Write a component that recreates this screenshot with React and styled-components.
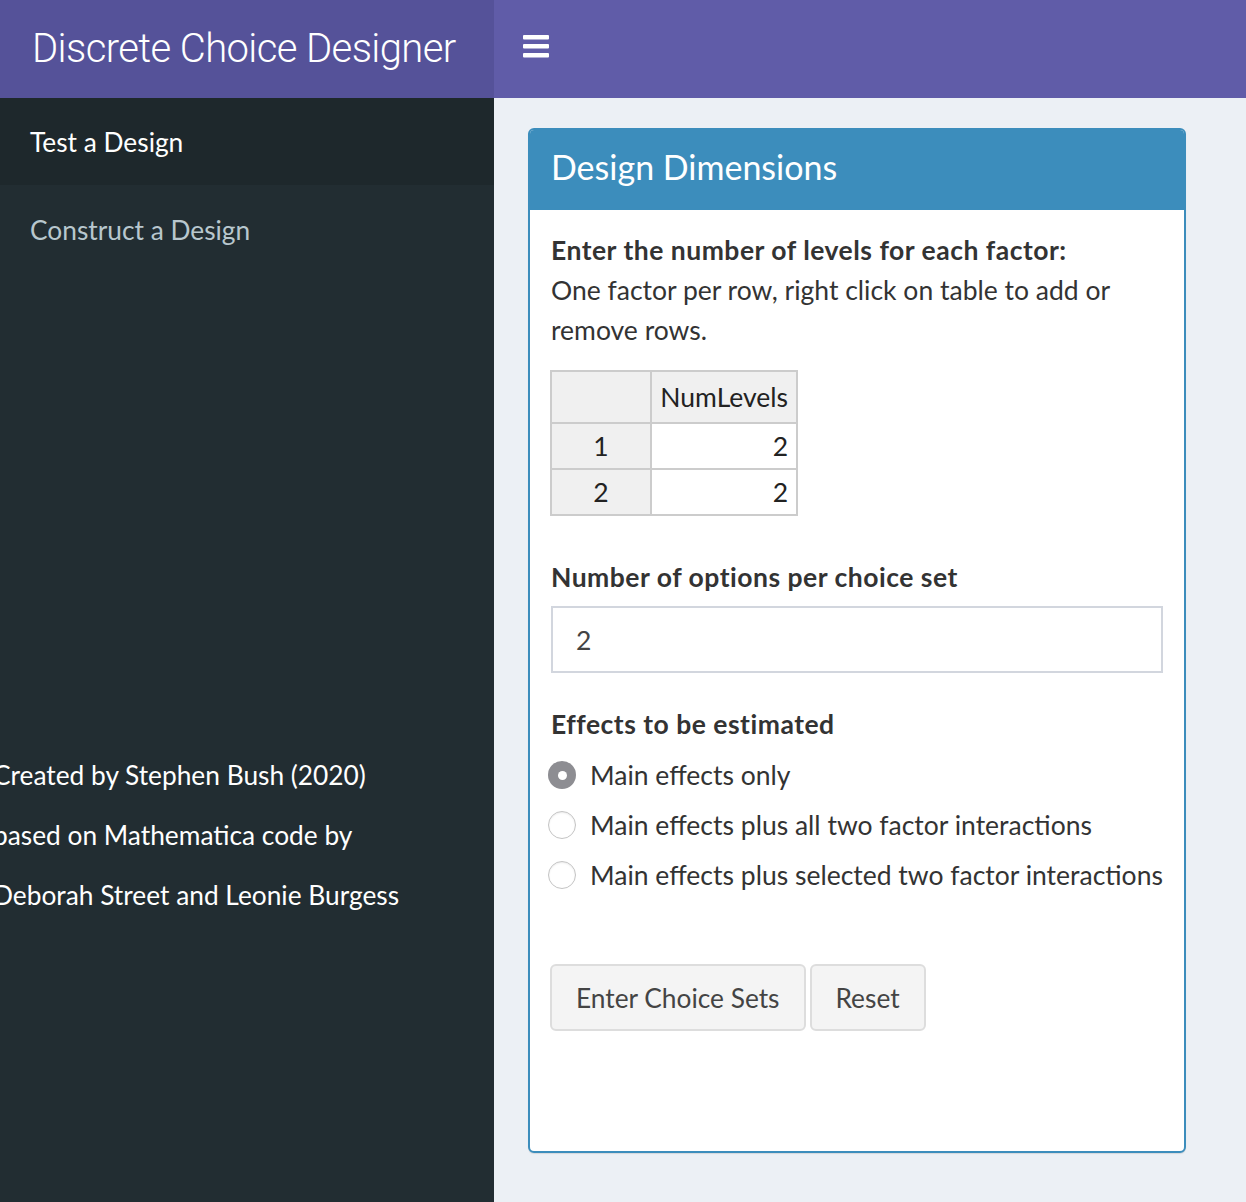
import React from "react";
import styled, { createGlobalStyle } from "styled-components";

const Global = createGlobalStyle`
  html, body { margin: 0; padding: 0; }
  body {
    background: #ecf0f5;
    font-family: Lato, "Open Sans", sans-serif;
    color: #333;
  }
  * { box-sizing: border-box; }
`;

const Page = styled.div`
  width: 1246px;
  min-height: 1202px;
  display: flex;
  flex-direction: column;
  overflow: hidden;
`;

const Header = styled.header`
  display: flex;
  height: 98px;
`;

const Logo = styled.div`
  width: 494px;
  background: #555299;
  color: #fff;
  font-family: Roboto, "Liberation Sans", sans-serif;
  font-weight: 300;
  font-size: 40px;
  letter-spacing: -0.6px;
  display: flex;
  align-items: center;
  padding-left: 32px;
  padding-bottom: 2px;
`;

const Navbar = styled.nav`
  flex: 1;
  background: #605ca8;
  display: flex;
  align-items: center;
  padding-left: 29px;
`;

const Toggle = styled.button`
  background: none;
  border: 0;
  padding: 0;
  display: flex;
  margin-top: -4px;
`;

const Body = styled.div`
  display: flex;
  flex: 1;
`;

const Sidebar = styled.aside`
  width: 494px;
  background: #222d32;
  min-height: 1104px;
  display: flex;
  flex-direction: column;
`;

const MenuItem = styled.a`
  height: 87px;
  display: flex;
  align-items: center;
  padding-left: 30px;
  padding-top: ${(p) => (p.$active ? "0" : "3px")};
  font-size: 26.3px;
  color: ${(p) => (p.$active ? "#fff" : "#b8c7ce")};
  background: ${(p) => (p.$active ? "#1e282c" : "transparent")};
  text-decoration: none;
`;

const Credits = styled.div`
  margin-top: 473px;
  margin-left: -7px;
  color: #fff;
  font-size: 26.3px;
  line-height: 60px;
  white-space: nowrap;
`;

const Content = styled.main`
  flex: 1;
  padding: 30px 60px 0 34px;
`;

const Box = styled.section`
  border: 2px solid #3c8dbc;
  border-radius: 6px;
  background: #fff;
  height: 1025px;
  overflow: hidden;
  box-shadow: 0 1px 1px rgba(0, 0, 0, 0.1);
`;

const BoxHeader = styled.div`
  background: #3c8dbc;
  color: #fff;
  height: 80px;
  display: flex;
  align-items: center;
  padding-left: 21px;
  font-size: 34px;
  padding-bottom: 7px;
`;

const BoxBody = styled.div`
  padding: 20px 21px 0 21px;
  font-size: 26.5px;
  line-height: 40px;
`;

const Strong = styled.div`
  font-weight: 700;
  color: #333;
  letter-spacing: 0.5px;
`;

const Text = styled.div`
  color: #333;
`;

const Table = styled.table`
  margin-top: 20px;
  margin-left: -1px;
  border-collapse: collapse;
  font-size: 26.5px;
  color: #222;
`;

const Th = styled.th`
  background: #f0f0f0;
  border: 2px solid #ccc;
  font-weight: 400;
  height: ${(p) => (p.$head ? "52px" : "46px")};
  width: ${(p) => p.$w}px;
  text-align: ${(p) => (p.$right ? "right" : "center")};
  padding: 0 8px;
  line-height: 1;
`;

const Td = styled.td`
  background: #fff;
  border: 2px solid #ccc;
  text-align: right;
  padding: 0 8px;
  height: 46px;
  line-height: 1;
`;

const Label = styled(Strong)`
  margin-top: ${(p) => p.$mt}px;
`;

const Input = styled.div`
  margin-top: 9px;
  height: 67px;
  border: 2px solid #d2d6de;
  display: flex;
  align-items: center;
  padding-left: 23px;
  color: #444;
`;

const RadioList = styled.div`
  margin-top: 6px;
  display: flex;
  flex-direction: column;
`;

const RadioRow = styled.label`
  height: 50px;
  display: flex;
  align-items: center;
  gap: 14px;
  margin-left: -3px;
`;

const RadioDot = styled.span`
  width: 28px;
  height: 28px;
  border-radius: 50%;
  flex: none;
  display: flex;
  align-items: center;
  justify-content: center;
  background: ${(p) => (p.$on ? "#8d8d92" : "#fff")};
  border: ${(p) => (p.$on ? "none" : "1.5px solid #c4c4c4")};
  box-shadow: ${(p) => (p.$on ? "none" : "inset 0 1px 2px rgba(0,0,0,0.08)")};
  &::after {
    content: "";
    display: ${(p) => (p.$on ? "block" : "none")};
    width: 9px;
    height: 9px;
    border-radius: 50%;
    background: #fff;
  }
`;

const Buttons = styled.div`
  margin-top: 64px;
  display: flex;
  gap: 4px;
  margin-left: -1px;
`;

const Button = styled.button`
  height: 67px;
  padding: 0 24px;
  background: #f4f4f4;
  border: 2px solid #ddd;
  border-radius: 6px;
  font-family: inherit;
  font-size: 26.3px;
  color: #444;
`;

const Bars = () => (
  <svg width="26" height="24" viewBox="0 0 26 24">
    <rect x="0" y="0" width="26" height="4.6" rx="1" fill="#fff" />
    <rect x="0" y="9" width="26" height="4.6" rx="1" fill="#fff" />
    <rect x="0" y="18" width="26" height="4.6" rx="1" fill="#fff" />
  </svg>
);

const options = [
  "Main effects only",
  "Main effects plus all two factor interactions",
  "Main effects plus selected two factor interactions",
];

export default function App() {
  return (
    <Page>
      <Global />
      <Header>
        <Logo>Discrete Choice Designer</Logo>
        <Navbar>
          <Toggle aria-label="toggle">
            <Bars />
          </Toggle>
        </Navbar>
      </Header>
      <Body>
        <Sidebar>
          <MenuItem $active>Test a Design</MenuItem>
          <MenuItem>Construct a Design</MenuItem>
          <Credits>
            <div>Created by Stephen Bush (2020)</div>
            <div>based on Mathematica code by</div>
            <div>Deborah Street and Leonie Burgess</div>
          </Credits>
        </Sidebar>
        <Content>
          <Box>
            <BoxHeader>Design Dimensions</BoxHeader>
            <BoxBody>
              <Strong>Enter the number of levels for each factor:</Strong>
              <Text>
                One factor per row, right click on table to add or
                <br />
                remove rows.
              </Text>
              <Table>
                <thead>
                  <tr>
                    <Th $head $w={100}></Th>
                    <Th $head $w={146} $right>NumLevels</Th>
                  </tr>
                </thead>
                <tbody>
                  <tr>
                    <Th $w={100}>1</Th>
                    <Td>2</Td>
                  </tr>
                  <tr>
                    <Th $w={100}>2</Th>
                    <Td>2</Td>
                  </tr>
                </tbody>
              </Table>
              <Label $mt={41}>Number of options per choice set</Label>
              <Input>2</Input>
              <Label $mt={31}>Effects to be estimated</Label>
              <RadioList>
                {options.map((o, i) => (
                  <RadioRow key={o}>
                    <RadioDot $on={i === 0} />
                    {o}
                  </RadioRow>
                ))}
              </RadioList>
              <Buttons>
                <Button>Enter Choice Sets</Button>
                <Button>Reset</Button>
              </Buttons>
            </BoxBody>
          </Box>
        </Content>
      </Body>
    </Page>
  );
}
